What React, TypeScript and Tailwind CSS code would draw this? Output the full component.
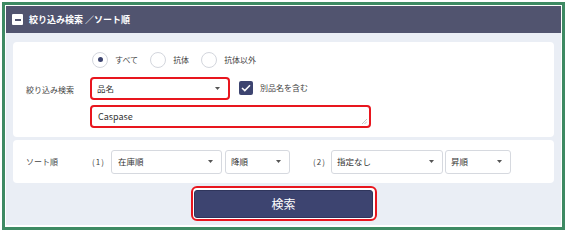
import React from 'react';

const font = { fontFamily: '"Noto Sans CJK JP", "Noto Sans", sans-serif' };

function Caret() {
  return (
    <svg width="5" height="3" viewBox="0 0 5 3" className="shrink-0">
      <path d="M0 0 L5 0 L2.5 3 Z" fill="#555" />
    </svg>
  );
}

function FakeSelect({ value, className }: { value: string; className: string }) {
  return (
    <div
      className={`flex items-center justify-between bg-white pl-[5px] pr-[8px] text-[8.5px] text-[#333] ${className}`}
    >
      <span>{value}</span>
      <Caret />
    </div>
  );
}

function Radio({ label, checked }: { label: string; checked?: boolean }) {
  return (
    <label className="flex items-center gap-[7px]">
      <span className="flex h-[16px] w-[16px] items-center justify-center rounded-full border border-[#d3d6dd] bg-white">
        {checked && <span className="h-[5px] w-[5px] rounded-full bg-[#3d4470]" />}
      </span>
      <span className="text-[8px] text-[#444]">{label}</span>
    </label>
  );
}

export default function App() {
  return (
    <div className="h-[233px] w-[567px] bg-white pl-[2px] pt-[2px]" style={font}>
      <div className="h-[228px] w-[563px] border-[3px] border-[#3e8a63] bg-white p-px">
        {/* Header */}
        <div className="flex h-[27px] items-center gap-[6px] bg-[#51546f] pl-[6px]">
          <span className="flex h-[11px] w-[11px] items-center justify-center rounded-[1px] bg-white">
            <span className="h-[2px] w-[6px] bg-[#51546f]" />
          </span>
          <span className="text-[9px] font-bold text-white">絞り込み検索 ／ソート順</span>
        </div>

        {/* Body */}
        <div className="flex h-[192px] flex-col bg-[#eaeef5] px-[7px] pt-[9px]">
          {/* Filter card */}
          <div className="flex h-[95px] items-center rounded-[4px] bg-white pl-[13px]">
            <div className="w-[64px] text-[8px] text-[#444]">絞り込み検索</div>
            <div className="flex flex-col">
              <div className="ml-[2px] flex h-[16px] items-center gap-[12px]">
                <Radio label="すべて" checked />
                <Radio label="抗体" />
                <Radio label="抗体以外" />
              </div>
              <div className="mt-[9px] flex items-center">
                <FakeSelect value="品名" className="h-[23px] w-[140px] rounded-[4px] border-2 border-[#e8161e]" />
                <span className="ml-[9px] flex h-[14px] w-[14px] items-center justify-center rounded-[2px] bg-[#3d4470]">
                  <svg width="10" height="8" viewBox="0 0 10 8">
                    <path d="M1 4 L3.8 6.6 L9 1.2" fill="none" stroke="white" strokeWidth="1.5" />
                  </svg>
                </span>
                <span className="ml-[7px] text-[8px] text-[#444]">別品名を含む</span>
              </div>
              <div className="relative mt-[5px]">
                <textarea
                  defaultValue="Caspase"
                  rows={1}
                  className="block h-[23px] w-[281px] resize-none rounded-[4px] border-2 border-[#e8161e] bg-white px-[6px] py-[3px] text-[9px] leading-[13px] text-[#333] outline-none"
                />
                <svg width="5" height="5" viewBox="0 0 5 5" className="absolute bottom-[4px] right-[4px]">
                  <path d="M5 0 L0 5 M5 2.5 L2.5 5" stroke="#b5b5b5" strokeWidth="0.8" />
                </svg>
              </div>
            </div>
          </div>

          {/* Sort card */}
          <div className="mt-[3px] flex h-[43px] items-center rounded-[4px] bg-white pl-[13px]">
            <div className="w-[64px] text-[8px] text-[#444]">ソート順</div>
            <span className="w-[21px] pl-[2px] text-[8px] tracking-[1px] text-[#444]">(1)</span>
            <FakeSelect value="在庫順" className="h-[24px] w-[111px] rounded-[3px] border border-[#d6d9df] pl-[6px]" />
            <FakeSelect value="降順" className="ml-[3px] h-[24px] w-[65px] rounded-[3px] border border-[#d6d9df]" />
            <span className="ml-[21px] w-[20px] pl-[2px] text-[8px] tracking-[1px] text-[#444]">(2)</span>
            <FakeSelect value="指定なし" className="h-[24px] w-[112px] rounded-[3px] border border-[#d6d9df]" />
            <FakeSelect value="昇順" className="ml-[2px] h-[24px] w-[66px] rounded-[3px] border border-[#d6d9df]" />
          </div>

          {/* Search button */}
          <div className="mt-[3px] flex justify-center">
            <div className="rounded-[6px] border-2 border-[#e8161e] bg-white p-[1.5px]">
              <button className="flex h-[28px] w-[179px] items-center justify-center rounded-[3px] border border-[#2f355c] bg-[#3d4470] text-[12px] text-white">
                検索
              </button>
            </div>
          </div>
        </div>
      </div>
    </div>
  );
}
